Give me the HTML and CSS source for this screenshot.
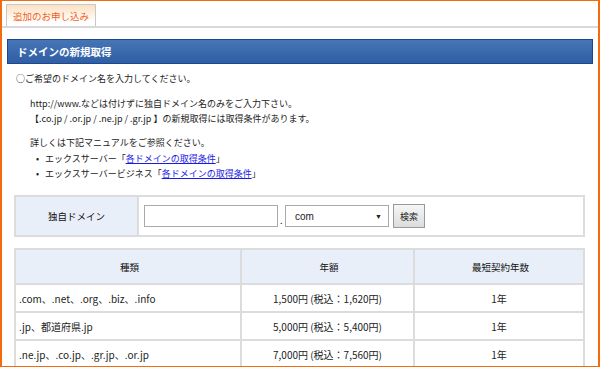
FILE: index.html
```html
<!DOCTYPE html>
<html lang="ja">
<head>
    <meta charset="UTF-8">
    <title>ドメインの新規取得</title>
    <link rel="stylesheet" href="styles.css">
</head>
<body>
    <div class="frame">
        <!-- タブ -->
        <div class="tabs">
            <div class="tab">追加のお申し込み</div>
        </div>

        <div class="content">
            <h2 class="bar">ドメインの新規取得</h2>

            <div class="intro">
                <p class="lead">○ご希望のドメイン名を入力してください。</p>
                <p class="note">
                    http://www.などは付けずに独自ドメイン名のみをご入力下さい。<br>
                    【.co.jp / .or.jp / .ne.jp / .gr.jp 】の新規取得には取得条件があります。
                </p>
                <p class="note last">詳しくは下記マニュアルをご参照ください。</p>
                <ul class="links">
                    <li>エックスサーバー「<a href="#">各ドメインの取得条件</a>」</li>
                    <li>エックスサーバービジネス「<a href="#">各ドメインの取得条件</a>」</li>
                </ul>
            </div>

            <!-- 検索フォーム -->
            <table class="search">
                <tr>
                    <th>独自ドメイン</th>
                    <td>
                        <div class="search-row">
                            <input type="text" class="domain">
                            <span class="dot">.</span>
                            <div class="select">
                                <span>com</span>
                                <span class="arrow">▼</span>
                            </div>
                            <button type="button" class="btn">検索</button>
                        </div>
                    </td>
                </tr>
            </table>

            <!-- 料金表 -->
            <table class="price">
                <tr>
                    <th class="col-type">種類</th>
                    <th class="col-fee">年額</th>
                    <th class="col-term">最短契約年数</th>
                </tr>
                <tr>
                    <td>.com、.net、.org、.biz、.info</td>
                    <td class="center">1,500円 (税込：1,620円)</td>
                    <td class="center">1年</td>
                </tr>
                <tr>
                    <td>.jp、都道府県.jp</td>
                    <td class="center">5,000円 (税込：5,400円)</td>
                    <td class="center">1年</td>
                </tr>
                <tr>
                    <td>.ne.jp、.co.jp、.gr.jp、.or.jp</td>
                    <td class="center">7,000円 (税込：7,560円)</td>
                    <td class="center">1年</td>
                </tr>
            </table>
        </div>
    </div>
</body>
</html>
```

FILE: styles.css
```css
/* 全体 */
body {
    margin: 0;
    font-family: "Noto Sans CJK JP", "Noto Sans", sans-serif;
    font-size: 9px;
    color: #222;
    background-color: #fff;
}

.frame {
    box-sizing: border-box;
    width: 600px;
    height: 367px;
    overflow: hidden;
    border-top: 1px solid #f26b0f;
    border-left: 2px solid #f26b0f;
    border-right: 2px solid #f26b0f;
    border-bottom: 1px solid #f26b0f;
}

/* タブ */
.tabs {
    padding: 3px 0 0 4px;
    border-bottom: 2px solid #d9d9d9;
    height: 22px;
}

.tab {
    box-sizing: border-box;
    width: 90px;
    height: 22px;
    border: 1px solid #c8c8c8;
    border-bottom: none;
    background: linear-gradient(#fde0c2, #fff 80%);
    color: #f2601a;
    line-height: 22px;
    text-align: center;
    font-size: 9.5px;
}

.content {
    padding: 11px 5px 0 5px;
}

/* 見出しバー */
.bar {
    box-sizing: border-box;
    margin: 0;
    height: 25px;
    padding-left: 9px;
    border: 1px solid #1d4891;
    background: linear-gradient(#4676b6, #2f5ea4);
    color: #fff;
    font-size: 10.5px;
    font-weight: bold;
    line-height: 23px;
}

/* 説明文 */
.intro {
    padding: 7px 0 0 9px;
    line-height: 15px;
}

.intro p {
    margin: 0;
}

.lead {
    margin-bottom: 10px !important;
}

.note {
    padding-left: 14px;
    margin-bottom: 9px !important;
}

.note.last {
    margin-bottom: 1px !important;
}

.links {
    margin: 0;
    padding-left: 20px;
    list-style: none;
}

.links li::before {
    content: "•";
    display: inline-block;
    width: 9px;
}

.links a {
    color: #1a1ae6;
}

/* 検索フォーム */
.search {
    width: 571px;
    margin: 14px 0 0 7px;
    border-collapse: collapse;
    border: 2px solid #dcdcdc;
}

.search th {
    width: 121px;
    height: 38px;
    padding: 0;
    background-color: #e9eff8;
    border-right: 2px solid #dcdcdc;
    font-weight: normal;
    font-size: 9.5px;
    color: #111;
}

.search td {
    padding: 0 0 0 5px;
}

.search-row {
    display: flex;
    align-items: center;
}

.domain {
    box-sizing: border-box;
    width: 134px;
    height: 22px;
    margin: 0;
    border: 1px solid #aaa;
}

.dot {
    width: 7px;
    padding-left: 2px;
    box-sizing: border-box;
    align-self: flex-end;
    line-height: 14px;
}

.select {
    box-sizing: border-box;
    display: flex;
    justify-content: space-between;
    align-items: center;
    width: 104px;
    height: 22px;
    padding: 0 6px 0 9px;
    border: 1px solid #aaa;
    font-family: "Liberation Sans", Arial, sans-serif;
    font-size: 10px;
    color: #222;
}

.select .arrow {
    font-size: 7px;
}

.btn {
    box-sizing: border-box;
    width: 32px;
    height: 24px;
    margin-left: 4px;
    padding: 0;
    border: 1px solid #999;
    background: linear-gradient(#f6f6f6, #dcdcdc);
    font-family: inherit;
    font-size: 9px;
    color: #222;
}

/* 料金表 */
.price {
    width: 571px;
    margin: 11px 0 0 7px;
    border-collapse: collapse;
    border: 2px solid #dcdcdc;
}

.price th,
.price td {
    border: 2px solid #dcdcdc;
    padding: 0 0 0 3px;
}

.price th {
    height: 33px;
    background-color: #e9eff8;
    font-weight: normal;
    font-size: 9.5px;
    color: #111;
}

.price td {
    height: 26px;
    font-size: 10px;
    color: #222;
}

.price .center {
    text-align: center;
    padding: 0;
}

.col-type {
    width: 221px;
}

.col-fee {
    width: 168px;
}
```
